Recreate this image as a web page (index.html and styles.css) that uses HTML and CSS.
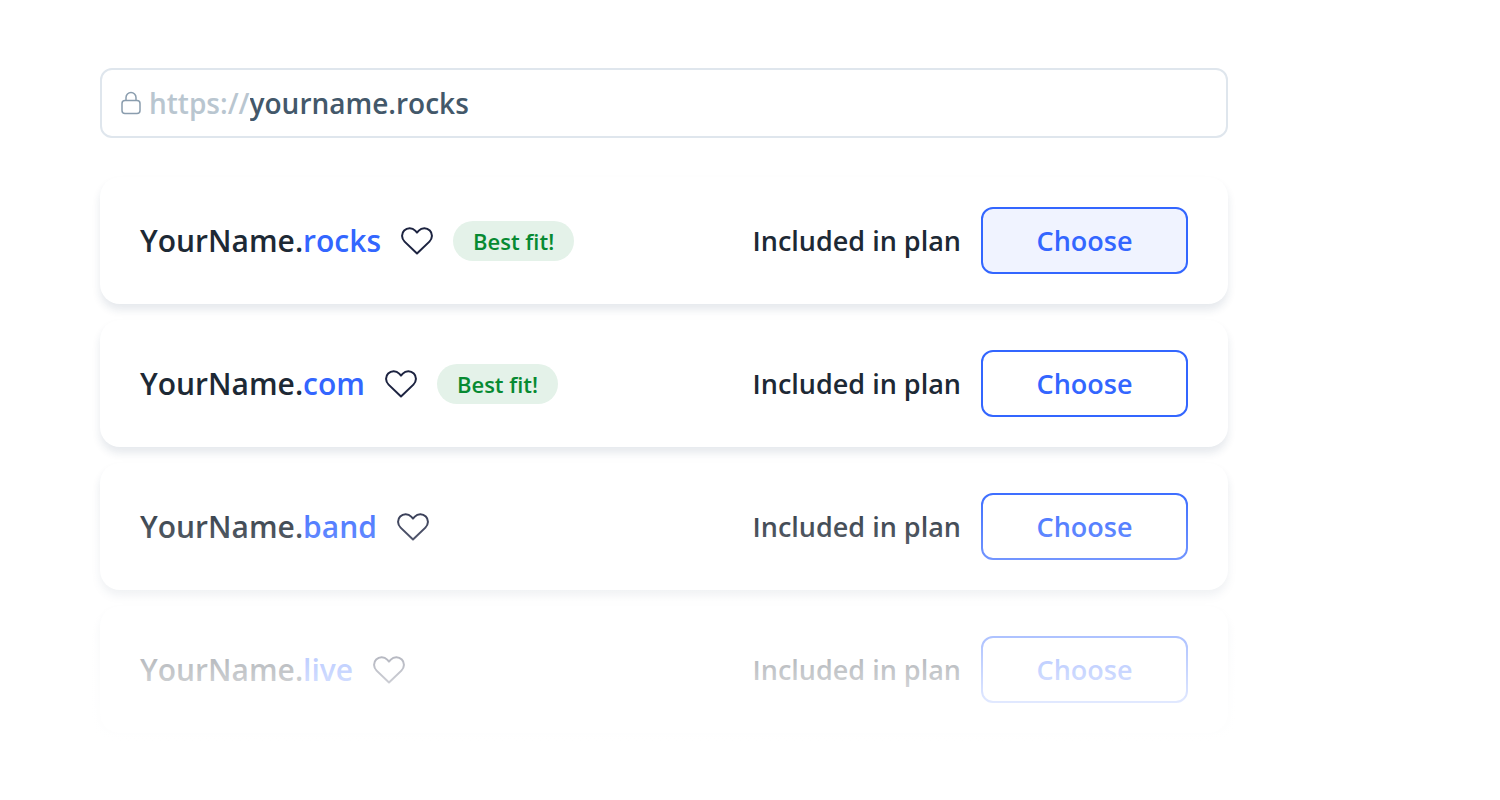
FILE: index.html
```html
<!DOCTYPE html>
<html lang="en">
<head>
  <meta charset="UTF-8">
  <meta name="viewport" content="width=device-width, initial-scale=1.0">
  <title>Choose a domain</title>
  <link rel="stylesheet" href="styles.css">
</head>
<body>
  <!-- Heart icon shared by all results -->
  <svg class="sprite" aria-hidden="true">
    <symbol id="heart" viewBox="0 0 32 28">
      <path d="M16 26.5 L3.6 14.6 C0.4 11.4 0.2 6.5 3.2 3.5 C6.3 0.4 11.2 0.5 14.2 3.6 L16 5.6 L17.8 3.6 C20.8 0.5 25.7 0.4 28.8 3.5 C31.8 6.5 31.6 11.4 28.4 14.6 Z"/>
    </symbol>
  </svg>

  <main class="container">
    <form class="address-bar">
      <svg class="lock" viewBox="0 0 20 24" aria-hidden="true">
        <rect x="1" y="9.5" width="18" height="13" rx="3"/>
        <path d="M5 9.5 V6.5 a5 5 0 0 1 10 0 V9.5"/>
      </svg>
      <label for="domain">https://</label>
      <input type="text" id="domain" name="domain" value="yourname.rocks">
    </form>

    <ul class="results">
      <li class="card">
        <h2>YourName.<span>rocks</span></h2>
        <button class="like-btn" type="button" aria-label="Like"><svg><use href="#heart"/></svg></button>
        <span class="badge">Best fit!</span>
        <p class="price">Included in plan</p>
        <button class="choose-btn selected" type="button">Choose</button>
      </li>
      <li class="card">
        <h2>YourName.<span>com</span></h2>
        <button class="like-btn" type="button" aria-label="Like"><svg><use href="#heart"/></svg></button>
        <span class="badge">Best fit!</span>
        <p class="price">Included in plan</p>
        <button class="choose-btn" type="button">Choose</button>
      </li>
      <li class="card">
        <h2>YourName.<span>band</span></h2>
        <button class="like-btn" type="button" aria-label="Like"><svg><use href="#heart"/></svg></button>
        <p class="price">Included in plan</p>
        <button class="choose-btn" type="button">Choose</button>
      </li>
      <li class="card">
        <h2>YourName.<span>live</span></h2>
        <button class="like-btn" type="button" aria-label="Like"><svg><use href="#heart"/></svg></button>
        <p class="price">Included in plan</p>
        <button class="choose-btn" type="button">Choose</button>
      </li>
    </ul>
  </main>
</body>
</html>
```
FILE: styles.css
```css
* {
  margin: 0;
  padding: 0;
  box-sizing: border-box;
}

body {
  font-family: "Open Sans", "Noto Sans", sans-serif;
  font-weight: 600;
  background-color: #fff;
  color: #1d2935;
}

.sprite {
  position: absolute;
  width: 0;
  height: 0;
}

.container {
  max-width: 1328px;
  padding: 68px 100px;
}

/* Address bar */
.address-bar {
  display: flex;
  align-items: center;
  height: 70px;
  padding: 0 19px;
  border: 2px solid #dfe6ed;
  border-radius: 12px;
  font-size: 28px;
}

.lock {
  width: 20px;
  height: 24px;
  margin-right: 8px;
  fill: none;
  stroke: #8a9dae;
  stroke-width: 1.5;
}

.address-bar label {
  color: #b9c6d0;
}

.address-bar input {
  flex: 1;
  min-width: 0;
  border: none;
  outline: none;
  background: none;
  font: inherit;
  color: #43586a;
}

/* Results */
.results {
  position: relative;
  display: grid;
  gap: 16px;
  margin-top: 39px;
  list-style: none;
}

/* Fades out the lower results */
.results::after {
  content: "";
  position: absolute;
  inset: 302px -20px -20px;
  background: linear-gradient(rgba(255, 255, 255, 0), #fff 262px);
  pointer-events: none;
}

.card {
  display: flex;
  align-items: center;
  gap: 20px;
  padding: 30px 40px;
  border-radius: 20px;
  background-color: #fff;
  box-shadow: 0 6px 8px rgba(29, 58, 90, 0.11);
}

.card h2 {
  font-size: 30px;
  font-weight: 600;
}

.card h2 span {
  color: #3366ff;
}

.like-btn {
  width: 32px;
  height: 28px;
  border: none;
  background: none;
  cursor: pointer;
}

.like-btn svg {
  display: block;
  width: 32px;
  height: 28px;
  fill: none;
  stroke: #1c2340;
  stroke-width: 2;
  stroke-linejoin: round;
}

.badge {
  padding: 0 20px;
  border-radius: 20px;
  background-color: #e4f2e9;
  color: #078a32;
  font-size: 22px;
  line-height: 40px;
}

.price {
  margin-left: auto;
  font-size: 27px;
}

.choose-btn {
  width: 207px;
  height: 67px;
  border: 2px solid #3366ff;
  border-radius: 12px;
  background-color: #fff;
  color: #3366ff;
  font: inherit;
  font-size: 27px;
  cursor: pointer;
}

.choose-btn.selected {
  background-color: #f0f3ff;
}
```
